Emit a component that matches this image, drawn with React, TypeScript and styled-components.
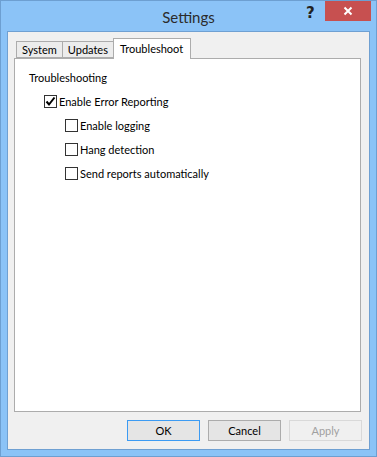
import React from "react";
import styled, { createGlobalStyle } from "styled-components";

const Global = createGlobalStyle`
  html, body { margin: 0; padding: 0; background: #fff; }
  * { box-sizing: border-box; }
`;

const Window = styled.div`
  width: 377px;
  height: 457px;
  background: #8bc3f7;
  border: 1px solid #6d9fd1;
  display: flex;
  flex-direction: column;
  font-family: Lato, "Noto Sans", sans-serif;
  font-size: 11px;
  color: #000;
`;

const TitleBar = styled.div`
  height: 30px;
  position: relative;
  display: flex;
  align-items: center;
  justify-content: center;
  flex-shrink: 0;
`;

const Title = styled.div`
  font-size: 15px;
  color: #2b2b2b;
  margin-top: 1px;
`;

const Help = styled.div`
  position: absolute;
  left: 305px;
  top: 3px;
  font-size: 15px;
  font-weight: 700;
  color: #222;
  font-family: "DejaVu Sans", sans-serif;
`;

const CloseButton = styled.div`
  position: absolute;
  left: 324px;
  top: 0;
  width: 46px;
  height: 20px;
  background: #c75050;
  display: flex;
  align-items: center;
  justify-content: center;
`;

const Client = styled.div`
  flex: 1;
  margin: 0 6px 6px 6px;
  background: #f0f0f0;
  border: 1px solid #6fa0d2;
  padding: 6px 7px 8px 6px;
  display: flex;
  flex-direction: column;
`;

const TabStrip = styled.div`
  display: flex;
  height: 20px;
  padding-left: 2px;
  align-items: flex-start;
  position: relative;
  z-index: 1;
`;

const Tab = styled.div<{ $active?: boolean }>`
  height: ${(p) => (p.$active ? "21px" : "17px")};
  margin-top: ${(p) => (p.$active ? "0" : "3px")};
  padding: ${(p) => (p.$active ? "0 7px 1px 6px" : "0 5px")};
  background: ${(p) => (p.$active ? "#fff" : "#ececec")};
  border: 1px solid #acacac;
  border-bottom: ${(p) => (p.$active ? "none" : "1px solid #acacac")};
  & + & { margin-left: -1px; }
  display: flex;
  align-items: center;
  line-height: 1;
  white-space: nowrap;
`;

const Panel = styled.div`
  width: 347px;
  height: 354px;
  background: #fff;
  border: 1px solid #acacac;
  padding: 10px 0 0 14px;
  display: flex;
  flex-direction: column;
`;

const GroupLabel = styled.div`
  height: 18px;
  line-height: 18px;
  margin-bottom: 2px;
`;

const Row = styled.label<{ $indent?: boolean }>`
  display: flex;
  align-items: center;
  height: 24px;
  padding-left: ${(p) => (p.$indent ? "36px" : "15px")};
  gap: 2px;
  white-space: nowrap;
`;

const Box = styled.span`
  width: 13px;
  height: 13px;
  border: 1px solid #333;
  background: #fff;
  display: inline-flex;
  align-items: center;
  justify-content: center;
  flex-shrink: 0;
`;

const ButtonRow = styled.div`
  display: flex;
  justify-content: flex-end;
  gap: 8px;
  margin-top: 8px;
`;

const Button = styled.div<{ $default?: boolean; $disabled?: boolean }>`
  width: 73px;
  height: 21px;
  display: flex;
  align-items: center;
  justify-content: center;
  background: ${(p) => (p.$disabled ? "#f0f0f0" : "#e5e5e5")};
  border: 1px solid
    ${(p) => (p.$default ? "#3c9bf3" : p.$disabled ? "#d9d9d9" : "#acacac")};
  color: ${(p) => (p.$disabled ? "#a0a0a0" : "#000")};
`;

const Check = () => (
  <svg width="11" height="11" viewBox="0 0 11 11">
    <path d="M1.5 5.5 L4 8.5 L9.5 1.5" stroke="#000" strokeWidth="2" fill="none" />
  </svg>
);

const CheckBox: React.FC<{ checked?: boolean; label: string; indent?: boolean }> = ({
  checked,
  label,
  indent,
}) => (
  <Row $indent={indent}>
    <Box>{checked && <Check />}</Box>
    <span>{label}</span>
  </Row>
);

export default function App() {
  return (
    <>
      <Global />
      <Window>
        <TitleBar>
          <Title>Settings</Title>
          <Help>?</Help>
          <CloseButton>
            <svg width="10" height="10" viewBox="0 0 10 10">
              <path d="M1.5 1.5 L8.5 8.5 M8.5 1.5 L1.5 8.5" stroke="#fff" strokeWidth="2" />
            </svg>
          </CloseButton>
        </TitleBar>
        <Client>
          <TabStrip>
            <Tab>System</Tab>
            <Tab>Updates</Tab>
            <Tab $active>Troubleshoot</Tab>
          </TabStrip>
          <Panel>
            <GroupLabel>Troubleshooting</GroupLabel>
            <CheckBox checked label="Enable Error Reporting" />
            <CheckBox indent label="Enable logging" />
            <CheckBox indent label="Hang detection" />
            <CheckBox indent label="Send reports automatically" />
          </Panel>
          <ButtonRow>
            <Button $default>OK</Button>
            <Button>Cancel</Button>
            <Button $disabled>Apply</Button>
          </ButtonRow>
        </Client>
      </Window>
    </>
  );
}
